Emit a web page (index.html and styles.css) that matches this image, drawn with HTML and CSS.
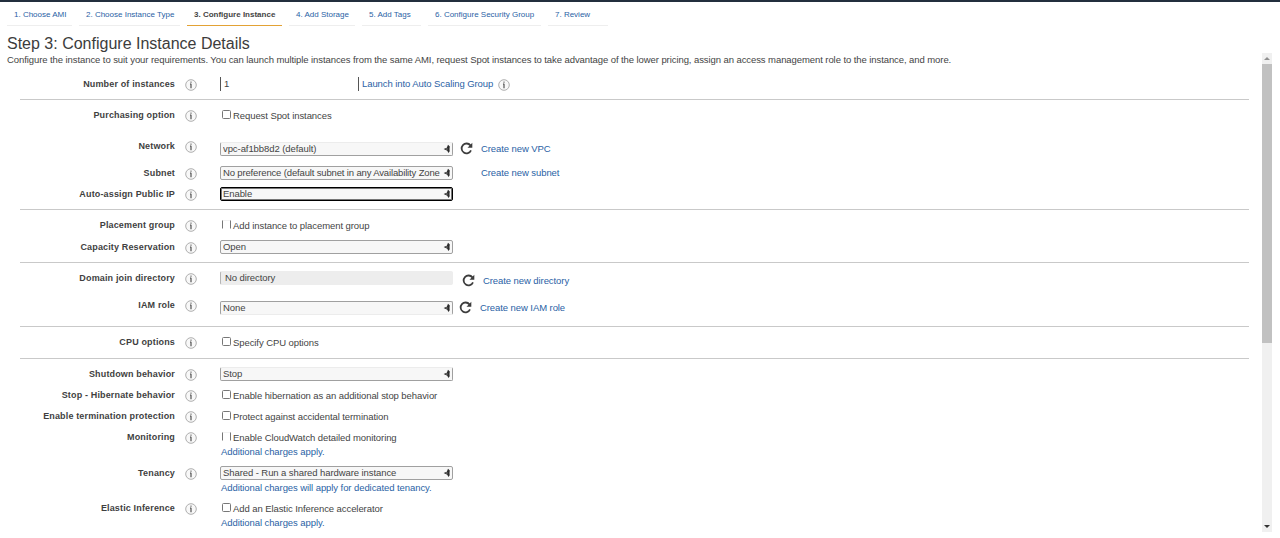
FILE: index.html
```html
<!DOCTYPE html>
<html lang="en">
<head>
<meta charset="utf-8">
<title>Step 3: Configure Instance Details</title>
<link rel="stylesheet" href="styles.css">
</head>
<body>
<svg class="defs" width="0" height="0" aria-hidden="true">
  <symbol id="info" viewBox="0 0 12 12"><circle cx="6" cy="6" r="5.3" fill="#f8f8f8" stroke="#a6a6a6" stroke-width=".9"/><path d="M6 4.8V9.2M5 5h1" stroke="#444" stroke-width="1.1" fill="none"/><circle cx="6" cy="3.1" r=".7" fill="#444"/></symbol>
  <symbol id="refresh" viewBox="0 0 13 13"><path d="M10.4 3.4A4.9 4.9 0 1 0 11 8.4" fill="none" stroke="#3d3d3d" stroke-width="1.8"/><path d="M12.3 .7v5H7.5z" fill="#3d3d3d"/></symbol>
  <symbol id="arrows" viewBox="0 0 8 10"><path d="M5 .7L6.8 2.6 6.5 5 6.7 7.3 5.4 9 4.3 6.8 .6 5 3.8 3.8z" fill="#2b2b2b"/><path d="M3 5h1.6" stroke="#aaa" stroke-width=".8"/></symbol>
</svg>
<div class="topbar"></div>
<nav class="steps">
  <a class="step s1">1. Choose AMI</a>
  <a class="step s2">2. Choose Instance Type</a>
  <a class="step s3 active">3. Configure Instance</a>
  <a class="step s4">4. Add Storage</a>
  <a class="step s5">5. Add Tags</a>
  <a class="step s6">6. Configure Security Group</a>
  <a class="step s7">7. Review</a>
</nav>
<header class="intro">
  <h1>Step 3: Configure Instance Details</h1>
  <p>Configure the instance to suit your requirements. You can launch multiple instances from the same AMI, request Spot instances to take advantage of the lower pricing, assign an access management role to the instance, and more.</p>
</header>
<div class="content">
<main class="form">
  <section class="group g-count">
    <div class="row"><label>Number of instances</label><svg class="info"><use href="#info"/></svg><div class="control"><span class="number">1</span><a class="launch">Launch into Auto Scaling Group</a><svg class="info launch-info"><use href="#info"/></svg></div></div>
  </section>
  <section class="group g-network">
    <div class="row"><label>Purchasing option</label><svg class="info"><use href="#info"/></svg><div class="control"><i class="check"></i><span class="text">Request Spot instances</span></div></div>
    <div class="row network"><label>Network</label><svg class="info"><use href="#info"/></svg><div class="control lower"><span class="select soft-top"><span class="value">vpc-af1bb8d2 (default)</span><svg class="arrows"><use href="#arrows"/></svg></span><svg class="refresh"><use href="#refresh"/></svg><a>Create new VPC</a></div></div>
    <div class="row subnet"><label>Subnet</label><svg class="info"><use href="#info"/></svg><div class="control"><span class="select"><span class="value tight">No preference (default subnet in any Availability Zone</span><svg class="arrows"><use href="#arrows"/></svg></span><a class="subnet-link">Create new subnet</a></div></div>
    <div class="row public-ip"><label>Auto-assign Public IP</label><svg class="info"><use href="#info"/></svg><div class="control"><span class="select focus"><span class="value">Enable</span><svg class="arrows"><use href="#arrows"/></svg></span></div></div>
  </section>
  <section class="group g-placement">
    <div class="row"><label>Placement group</label><svg class="info"><use href="#info"/></svg><div class="control"><i class="check sides"></i><span class="text">Add instance to placement group</span></div></div>
    <div class="row capacity"><label>Capacity Reservation</label><svg class="info"><use href="#info"/></svg><div class="control"><span class="select"><span class="value">Open</span><svg class="arrows"><use href="#arrows"/></svg></span></div></div>
  </section>
  <section class="group g-domain">
    <div class="row"><label>Domain join directory</label><svg class="info"><use href="#info"/></svg><div class="control"><span class="select disabled"><span class="value">No directory</span></span><span class="directory-tools"><svg class="refresh"><use href="#refresh"/></svg><a>Create new directory</a></span></div></div>
    <div class="row iam"><label>IAM role</label><svg class="info"><use href="#info"/></svg><div class="control lower"><span class="select soft-bottom"><span class="value">None</span><svg class="arrows"><use href="#arrows"/></svg></span><svg class="refresh"><use href="#refresh"/></svg><a>Create new IAM role</a></div></div>
  </section>
  <section class="group g-cpu">
    <div class="row"><label>CPU options</label><svg class="info"><use href="#info"/></svg><div class="control"><i class="check"></i><span class="text">Specify CPU options</span></div></div>
  </section>
  <section class="group g-advanced">
    <div class="row"><label>Shutdown behavior</label><svg class="info"><use href="#info"/></svg><div class="control"><span class="select soft-top"><span class="value">Stop</span><svg class="arrows"><use href="#arrows"/></svg></span></div></div>
    <div class="row hibernate"><label>Stop - Hibernate behavior</label><svg class="info"><use href="#info"/></svg><div class="control"><i class="check"></i><span class="text">Enable hibernation as an additional stop behavior</span></div></div>
    <div class="row protect"><label>Enable termination protection</label><svg class="info"><use href="#info"/></svg><div class="control"><i class="check"></i><span class="text">Protect against accidental termination</span></div></div>
    <div class="row monitoring"><label>Monitoring</label><svg class="info"><use href="#info"/></svg><div class="control"><i class="check sides"></i><span class="text">Enable CloudWatch detailed monitoring</span></div></div>
    <a class="note">Additional charges apply.</a>
    <div class="row tenancy"><label>Tenancy</label><svg class="info"><use href="#info"/></svg><div class="control"><span class="select"><span class="value">Shared - Run a shared hardware instance</span><svg class="arrows"><use href="#arrows"/></svg></span></div></div>
    <a class="note">Additional charges will apply for dedicated tenancy.</a>
    <div class="row elastic"><label>Elastic Inference</label><svg class="info"><use href="#info"/></svg><div class="control"><i class="check"></i><span class="text">Add an Elastic Inference accelerator</span></div></div>
    <a class="note">Additional charges apply.</a>
  </section>
</main>
<div class="scrollbar"><i class="up"></i><i class="thumb"></i><i class="down"></i></div>
</div>
</body>
</html>
```
FILE: styles.css
```css
* { box-sizing: border-box; }
body { margin: 0; height: 538px; overflow: hidden; background: #fff; color: #444; font: 9.5px/12px "Liberation Sans", Arial, sans-serif; letter-spacing: -.08px; }
.defs { display: block; height: 0; }
a { color: #2a62a5; }
.topbar { height: 2px; background: #232f3e; }
.steps { display: flex; height: 24px; padding-left: 7px; gap: 7px; font-size: 8px; letter-spacing: 0; white-space: nowrap; }
.step { flex: none; height: 24px; padding: 7px 0 0 7px; border-bottom: 1px solid #eee; }
.s1 { width: 65px; }
.s2 { width: 101px; }
.s3 { width: 95px; }
.s4 { width: 66px; }
.s5 { width: 59px; }
.s6 { width: 113px; }
.s7 { width: 60px; }
.step.active { color: #444; font-weight: bold; border-bottom-color: #e3a235; }
.intro { height: 44px; padding: 8px 0 0 7px; white-space: nowrap; }
h1 { margin: 0; font-size: 16px; line-height: 20px; font-weight: normal; letter-spacing: 0; color: #3c3c3c; }
.intro p { margin: 0; line-height: 12px; }
.content { display: flex; height: 468px; }
.form { width: 1229px; margin-left: 20px; }
.group { border-bottom: 1px solid #c9c9c9; }
.g-count { height: 30px; padding-top: 4px; }
.g-network { height: 110px; padding-top: 5px; }
.g-placement { height: 53px; padding-top: 5px; }
.g-domain { height: 64px; padding-top: 5px; }
.g-cpu { height: 32px; padding-top: 5px; }
.g-advanced { height: 179px; padding-top: 5px; border: 0; }
.row { display: grid; grid-template-columns: 155px 30px 1fr; align-items: center; height: 20px; white-space: nowrap; }
.row label { text-align: right; font-size: 9px; font-weight: bold; letter-spacing: .15px; color: #3f3f3f; }
.info { width: 12px; height: 12px; margin: 1px 0 0 10px; }
.control { display: flex; align-items: center; height: 20px; padding-left: 15px; }
.lower { margin: 3px 0 -3px; }
.network { margin-top: 11px; }
.subnet { margin-top: 7px; }
.public-ip, .hibernate { margin-top: 1px; }
.capacity { margin-top: 2px; }
.iam { margin-top: 7px; }
.protect, .monitoring { margin-top: 1px; }
.number { width: 139px; height: 14px; padding: 1px 0 0 3px; border: solid #555; border-width: 0 1px; }
.launch { margin-left: 3px; }
.launch-info { margin-left: 5px; }
.check { width: 9px; height: 9px; margin: -1px 2px 0 2px; border: 1px solid #777; border-radius: 1.5px; }
.sides { border-top-color: #f2f2f2; border-bottom-color: #fff; border-radius: 0; }
.text { margin-top: 1px; }
.select { display: flex; align-items: center; width: 233px; height: 14px; padding: 0 1px 0 2px; border: 1px solid #a0a0a0; border-radius: 2px; background: #f7f7f7; }
.value { flex: 1; overflow: hidden; white-space: nowrap; }
.tight { letter-spacing: -.15px; }
.arrows { width: 8px; height: 10px; flex: none; }
.soft-top { border-top-color: #ececec; }
.soft-bottom { border-bottom-color: #ececec; }
.focus { border-color: #000; box-shadow: inset 0 0 0 1px #777; }
.disabled { background: #ededed; border-color: #ededed; border-left-color: #b5b5b5; padding-left: 4px; }
.refresh { width: 13px; height: 13px; margin: -2px 8px 0 7px; }
.subnet-link { margin-left: 28px; }
.directory-tools { display: flex; align-items: center; margin: 6px 0 0 2px; }
.iam .refresh { margin-left: 6px; }
.note { display: block; height: 12px; margin: -1px 0 0 201px; white-space: nowrap; }
.tenancy { margin-top: 5px; }
.elastic { margin-top: 4px; }
.scrollbar { display: flex; flex-direction: column; width: 10px; height: 479px; margin: -17px 0 0 13px; background: #f0f0f0; }
.up, .down { height: 11px; flex: none; display: grid; place-items: center; }
.up::before { content: ""; border: solid transparent; border-width: 0 3px 3px; border-bottom-color: #909090; }
.down::before { content: ""; border: solid transparent; border-width: 3px 3px 0; border-top-color: #333; }
.thumb { height: 279px; background: #c1c1c1; }
.down { margin-top: auto; }
```
